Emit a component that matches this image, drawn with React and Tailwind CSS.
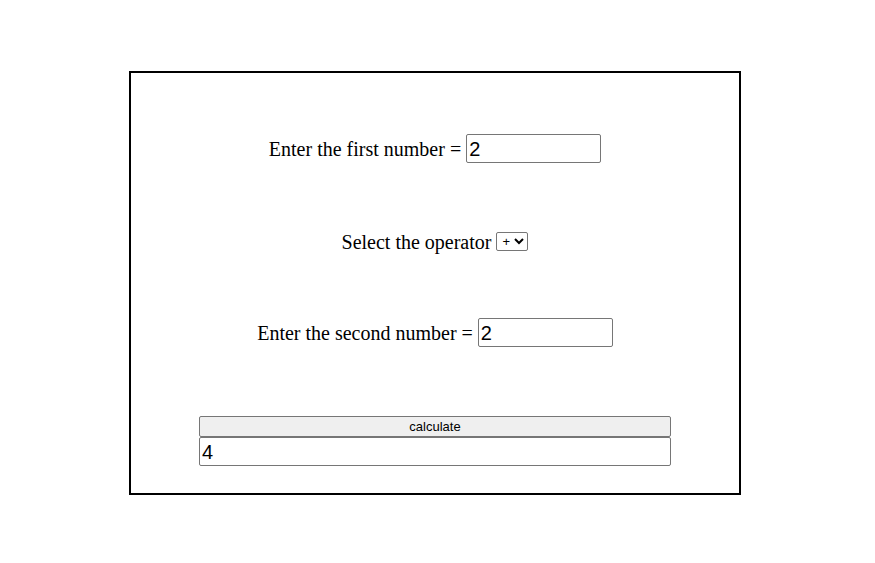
import { useState } from "react";

export default function App() {
  const [a, setA] = useState("2");
  const [op, setOp] = useState("+");
  const [b, setB] = useState("2");
  const [result, setResult] = useState("4");

  function calculate() {
    const x = parseFloat(a);
    const y = parseFloat(b);
    let r = 0;
    if (op === "+") r = x + y;
    if (op === "-") r = x - y;
    if (op === "*") r = x * y;
    if (op === "/") r = x / y;
    setResult(String(r));
  }

  const inputCls =
    "h-[29px] border border-[#767676] rounded-[2px] px-[2px] text-[20px] text-black bg-white outline-none font-['Liberation_Sans',Arial,sans-serif]";

  return (
    <div className="w-[875px] h-[563px] bg-white pt-[71px] pl-[129px] font-['Liberation_Serif','Times_New_Roman',serif] text-[20px] text-black">
      <div className="w-[612px] h-[424px] border-2 border-black flex flex-col items-center pt-[61px]">
        <div className="h-[29px] flex items-center">
          <span>Enter the first number =&nbsp;</span>
          <input
            className={`${inputCls} w-[135px]`}
            value={a}
            onChange={(e) => setA(e.target.value)}
          />
        </div>

        <div className="h-[29px] mt-[64px] flex items-center">
          <span>Select the operator&nbsp;</span>
          <select
            className="h-[19px] w-[32px] border border-[#767676] rounded-[2px] bg-white text-[13px] font-['Liberation_Sans',Arial,sans-serif] pl-[1px]"
            value={op}
            onChange={(e) => setOp(e.target.value)}
          >
            <option value="+">+</option>
            <option value="-">-</option>
            <option value="*">*</option>
            <option value="/">/</option>
          </select>
        </div>

        <div className="h-[29px] mt-[62px] flex items-center">
          <span>Enter the second number =&nbsp;</span>
          <input
            className={`${inputCls} w-[135px]`}
            value={b}
            onChange={(e) => setB(e.target.value)}
          />
        </div>

        {/* calculate button + result */}
        <div className="mt-[69px] w-[472px] flex flex-col">
          <button
            onClick={calculate}
            className="h-[21px] w-full border border-[#767676] rounded-[2px] bg-[#efefef] text-[13px] font-['Liberation_Sans',Arial,sans-serif] text-black"
          >
            calculate
          </button>
          <input
            className={`${inputCls} w-full text-[#3a1206]`}
            value={result}
            readOnly
          />
        </div>
      </div>
    </div>
  );
}
